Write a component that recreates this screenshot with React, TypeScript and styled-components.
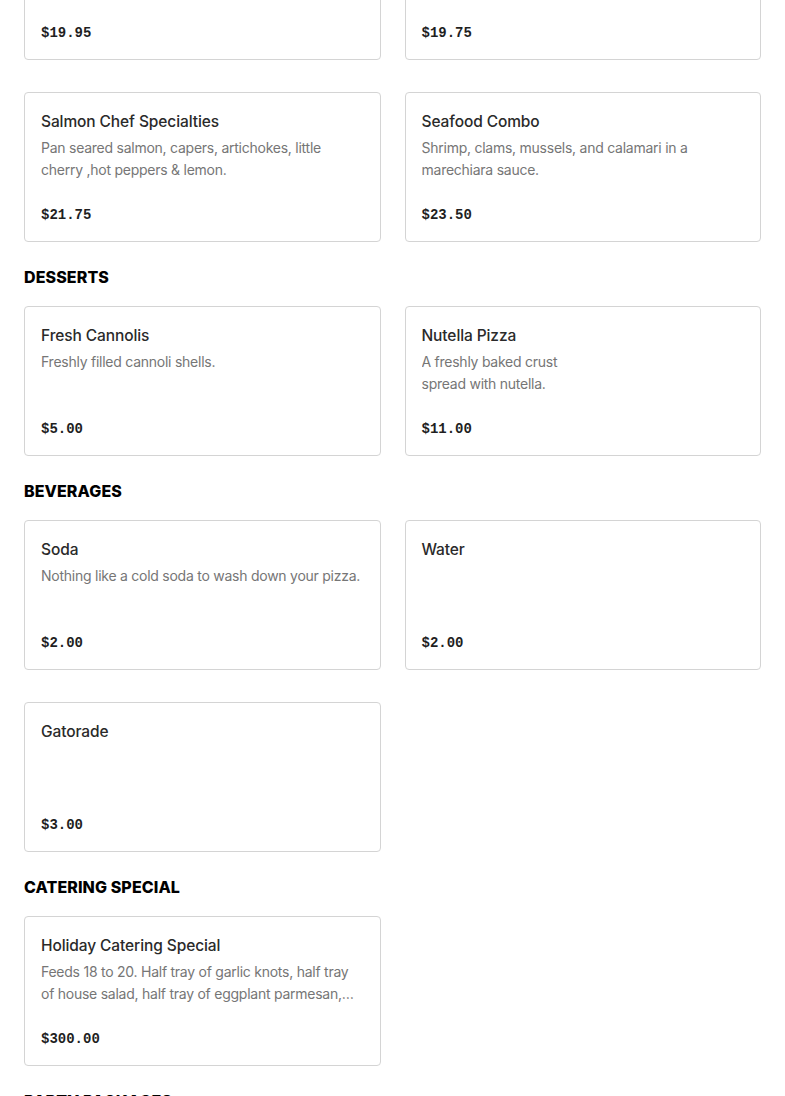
import React from "react";
import styled, { createGlobalStyle } from "styled-components";

const GlobalStyle = createGlobalStyle`
  html, body { margin: 0; padding: 0; background: #ffffff; }
  body { font-family: Inter, "Noto Sans", sans-serif; overflow: hidden; }
  * { box-sizing: border-box; }
`;

const Page = styled.div`
  margin-top: -90px;
  padding: 0 24px;
  display: flex;
  flex-direction: column;
`;

const Section = styled.section`
  display: flex;
  flex-direction: column;
  margin-bottom: 26px;
`;

const SectionTitle = styled.h2`
  margin: 0 0 21px;
  padding-top: 1px;
  font-family: Inter, sans-serif;
  font-weight: 800;
  font-size: 16px;
  line-height: 16px;
  letter-spacing: 0.1px;
  color: #000;
  text-transform: uppercase;
`;

const Grid = styled.div`
  display: grid;
  grid-template-columns: 1fr 1fr;
  column-gap: 24px;
  row-gap: 32px;
`;

const Card = styled.div`
  border: 1px solid #d4d4d4;
  border-radius: 4px;
  padding: 16px;
  height: 150px;
  display: flex;
  flex-direction: column;
  background: #fff;
`;

const Title = styled.div`
  padding-top: 1px;
  font-family: Inter, sans-serif;
  font-weight: 500;
  font-size: 15.5px;
  line-height: 24px;
  letter-spacing: -0.1px;
  color: #2a2a2a;
`;

const Desc = styled.div`
  margin-top: 3px;
  font-family: Inter, sans-serif;
  font-size: 14px;
  line-height: 22px;
  letter-spacing: -0.25px;
  color: #767676;
  height: 44px;
  overflow: hidden;
  white-space: pre-line;
  display: -webkit-box;
  -webkit-line-clamp: 2;
  -webkit-box-orient: vertical;
`;

const Price = styled.div`
  margin-top: auto;
  font-family: "Liberation Mono", "DejaVu Sans Mono", monospace;
  font-weight: 700;
  font-size: 14px;
  line-height: 20px;
  color: #1f1f1f;
`;

type Item = { name: string; desc?: string; price: string };

const sections: { title?: string; items: Item[] }[] = [
  {
    items: [
      { name: "Shrimp Scampi", desc: "Sautéed shrimp in garlic white wine sauce over linguine.", price: "$19.95" },
      { name: "Chicken Marsala", desc: "Chicken breast sautéed with mushrooms in marsala wine sauce.", price: "$19.75" },
      { name: "Salmon Chef Specialties", desc: "Pan seared salmon, capers, artichokes, little cherry ,hot peppers & lemon.", price: "$21.75" },
      { name: "Seafood Combo", desc: "Shrimp, clams, mussels, and calamari in a marechiara sauce.", price: "$23.50" },
    ],
  },
  {
    title: "Desserts",
    items: [
      { name: "Fresh Cannolis", desc: "Freshly filled cannoli shells.", price: "$5.00" },
      { name: "Nutella Pizza", desc: "A freshly baked crust\nspread with nutella.", price: "$11.00" },
    ],
  },
  {
    title: "Beverages",
    items: [
      { name: "Soda", desc: "Nothing like a cold soda to wash down your pizza.", price: "$2.00" },
      { name: "Water", price: "$2.00" },
      { name: "Gatorade", price: "$3.00" },
    ],
  },
  {
    title: "Catering Special",
    items: [
      {
        name: "Holiday Catering Special",
        desc: "Feeds 18 to 20. Half tray of garlic knots, half tray of house salad, half tray of eggplant parmesan, half tray of baked ziti and two large pizzas.",
        price: "$300.00",
      },
    ],
  },
  { title: "Party Packages", items: [] },
];

export default function App() {
  return (
    <>
      <GlobalStyle />
      <Page>
        {sections.map((s, i) => (
          <Section key={i}>
            {s.title && <SectionTitle>{s.title}</SectionTitle>}
            {s.items.length > 0 && (
              <Grid>
                {s.items.map((it) => (
                  <Card key={it.name}>
                    <Title>{it.name}</Title>
                    <Desc>{it.desc ?? ""}</Desc>
                    <Price>{it.price}</Price>
                  </Card>
                ))}
              </Grid>
            )}
          </Section>
        ))}
      </Page>
    </>
  );
}
